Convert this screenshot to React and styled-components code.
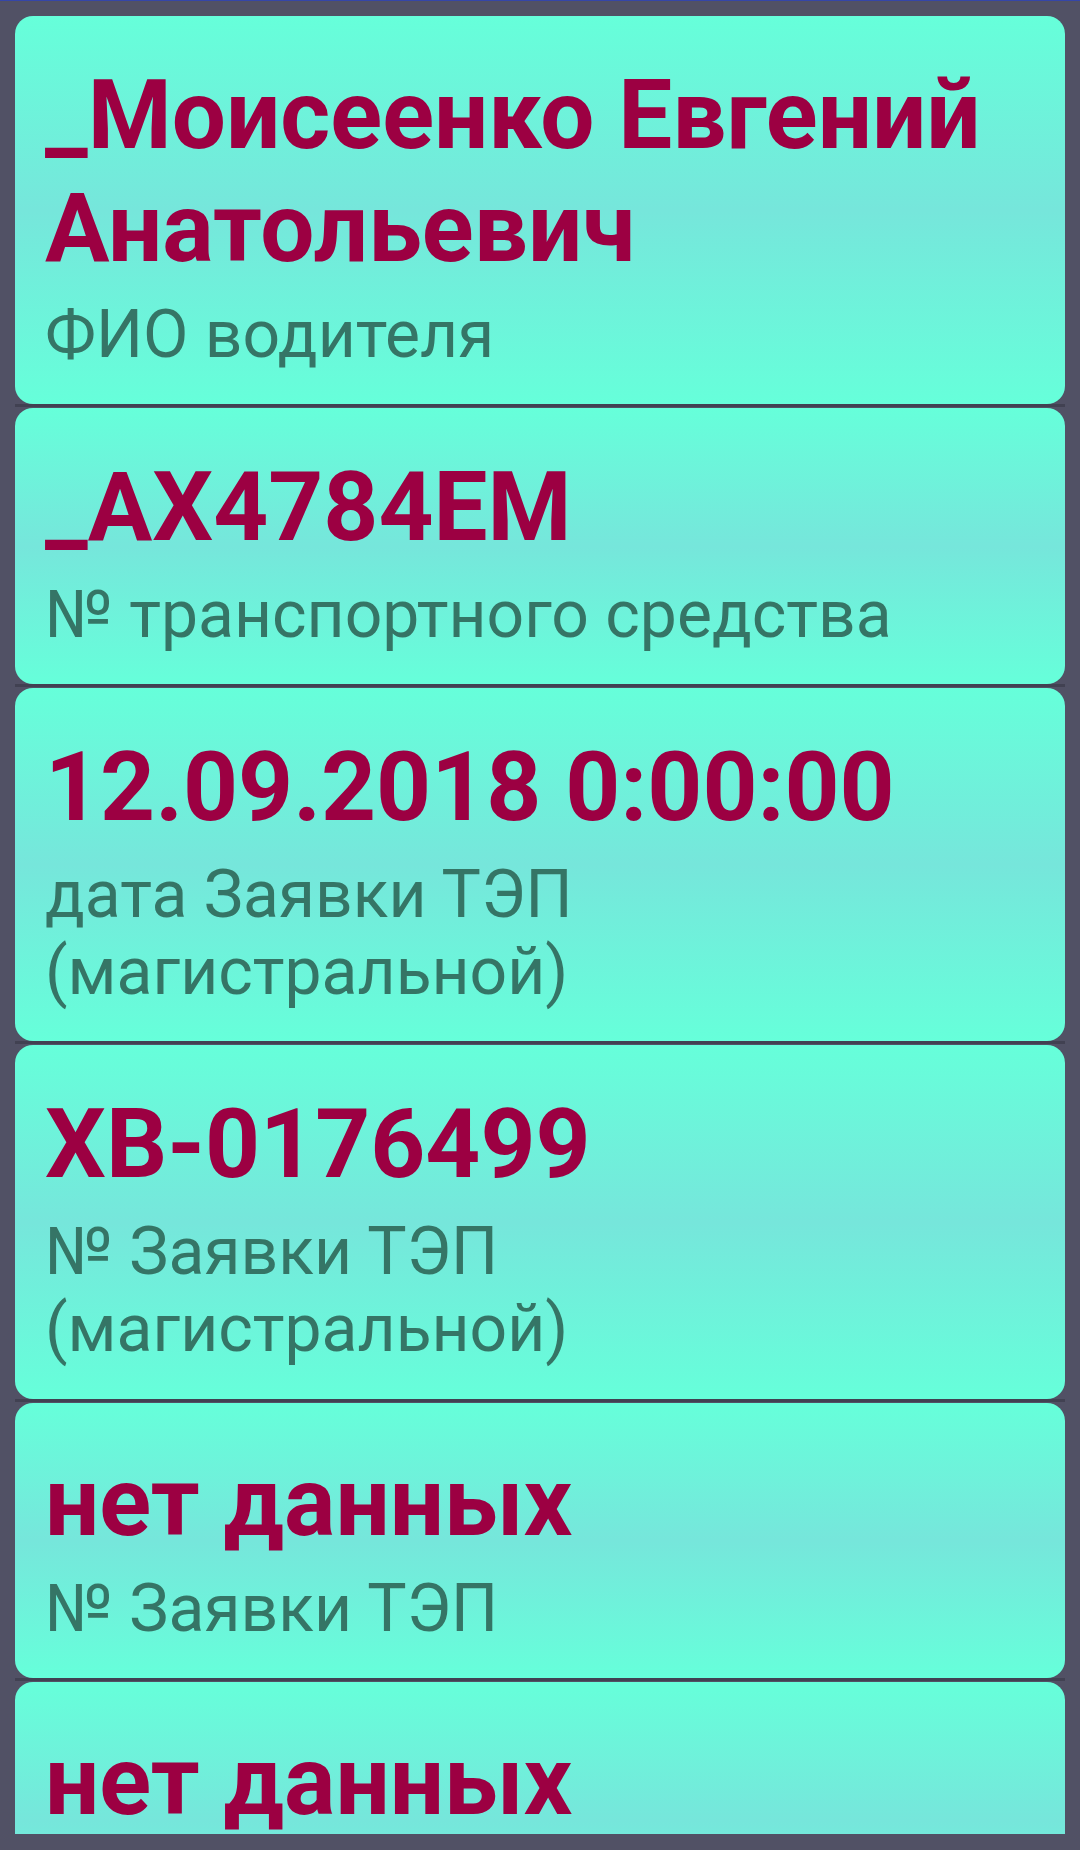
import styled, { createGlobalStyle } from 'styled-components';

const GlobalStyle = createGlobalStyle`
  html, body {
    margin: 0;
    padding: 0;
    background: #515165;
  }
  * {
    box-sizing: border-box;
  }
`;

const Screen = styled.div`
  height: 1850px;
  display: flex;
  flex-direction: column;
  padding: 15px 15px 16px;
  border-top: 1px solid #3546a8;
  background: #515165;
  font-family: Roboto, 'Liberation Sans', sans-serif;
`;

const List = styled.div`
  flex: 1;
  min-height: 0;
  overflow: hidden;
  display: flex;
  flex-direction: column;
`;

const Item = styled.div`
  flex-shrink: 0;
  border-bottom: 3px solid #414152;
  margin-bottom: 1px;
`;

const Card = styled.div`
  border-radius: 18px;
  padding: 43px 30px 31px;
  background: linear-gradient(180deg, #66ffda 0%, #76e6db 50%, #66ffda 100%);
`;

const Value = styled.div`
  color: #9c0042;
  font-size: 96px;
  font-weight: 700;
  line-height: 1.172;
`;

const Caption = styled.div`
  margin-top: 12px;
  color: #357566;
  font-size: 66px;
  font-weight: 400;
  line-height: 1.172;
`;

const fields = [
  { value: '_Моисеенко Евгений Анатольевич', caption: 'ФИО водителя' },
  { value: '_АХ4784ЕМ', caption: '№ транспортного средства' },
  { value: '12.09.2018 0:00:00', caption: 'дата Заявки ТЭП (магистральной)' },
  { value: 'ХВ-0176499', caption: '№ Заявки ТЭП (магистральной)' },
  { value: 'нет данных', caption: '№ Заявки ТЭП' },
  { value: 'нет данных', caption: 'дата Заявки ТЭП' },
];

export default function App() {
  return (
    <>
      <GlobalStyle />
      <Screen>
        <List>
          {fields.map((f, i) => (
            <Item key={i}>
              <Card>
                <Value>{f.value}</Value>
                <Caption>{f.caption}</Caption>
              </Card>
            </Item>
          ))}
        </List>
      </Screen>
    </>
  );
}
